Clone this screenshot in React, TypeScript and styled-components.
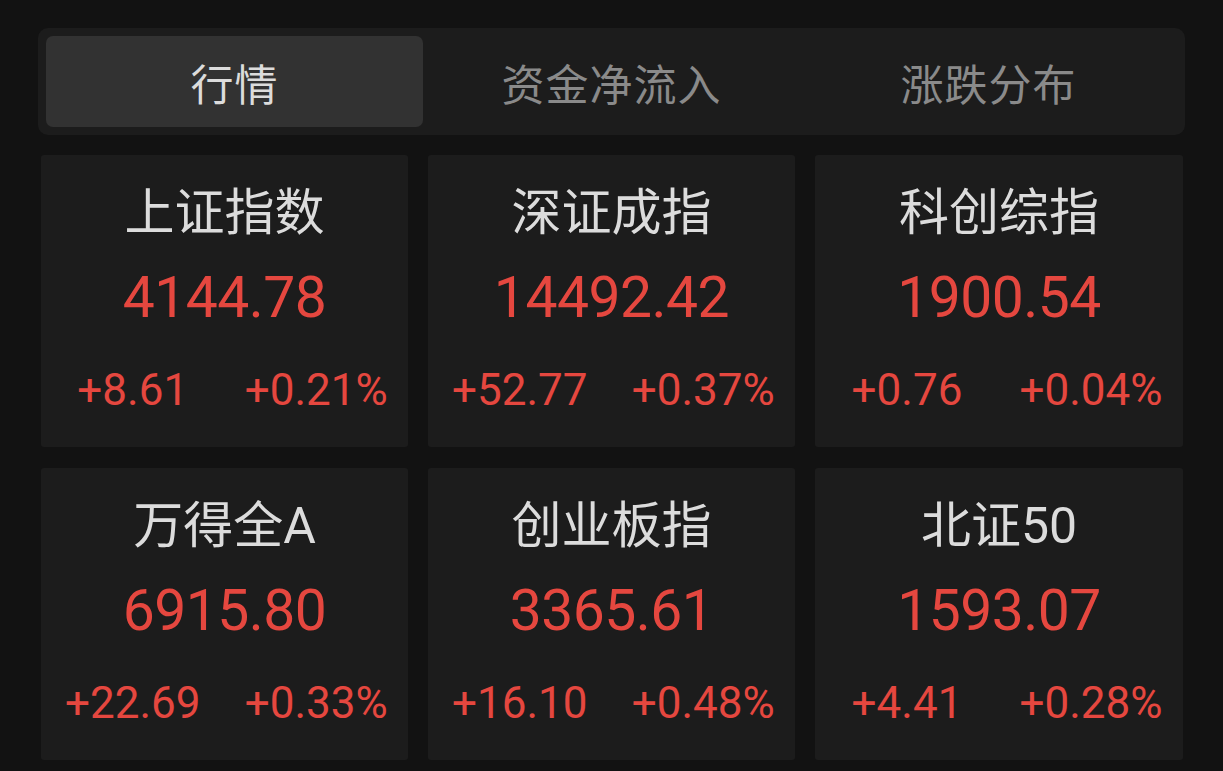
import React from 'react';
import styled, { createGlobalStyle } from 'styled-components';

const GlobalStyle = createGlobalStyle`
  html, body {
    margin: 0;
    padding: 0;
    background: #121212;
  }
  body {
    font-family: Roboto, "Noto Sans CJK SC", sans-serif;
  }
`;

type Quote = {
  name: string;
  price: string;
  change: string;
  percent: string;
};

const quotes: Quote[] = [
  { name: '上证指数', price: '4144.78', change: '+8.61', percent: '+0.21%' },
  { name: '深证成指', price: '14492.42', change: '+52.77', percent: '+0.37%' },
  { name: '科创综指', price: '1900.54', change: '+0.76', percent: '+0.04%' },
  { name: '万得全A', price: '6915.80', change: '+22.69', percent: '+0.33%' },
  { name: '创业板指', price: '3365.61', change: '+16.10', percent: '+0.48%' },
  { name: '北证50', price: '1593.07', change: '+4.41', percent: '+0.28%' },
];

const tabs = ['行情', '资金净流入', '涨跌分布'];

const Page = styled.div`
  width: 1223px;
  height: 771px;
  box-sizing: border-box;
  padding: 28px 38px 0 38px;
  background: #121212;
  overflow: hidden;
`;

const TabBar = styled.div`
  display: grid;
  grid-template-columns: repeat(3, 1fr);
  padding: 8px;
  background: #1c1c1c;
  border-radius: 10px;
  height: 107px;
  box-sizing: border-box;
`;

const Tab = styled.div<{ $active?: boolean }>`
  display: flex;
  align-items: center;
  justify-content: center;
  border-radius: 7px;
  background: ${(p) => (p.$active ? '#323232' : 'transparent')};
  color: ${(p) => (p.$active ? '#dcdcdc' : '#8a8a8a')};
  font-family: "Noto Sans CJK SC", sans-serif;
  font-size: 43px;
  letter-spacing: 1px;
`;

const Grid = styled.div`
  display: grid;
  grid-template-columns: 367px 367px 368px;
  grid-auto-rows: 292px;
  column-gap: 20px;
  row-gap: 21px;
  margin: 20px 0 0 3px;
`;

const Card = styled.div`
  display: flex;
  flex-direction: column;
  align-items: center;
  background: #1c1c1c;
  border-radius: 3px;
  padding-top: 30px;
  box-sizing: border-box;
`;

const Name = styled.div`
  font-family: Roboto, "Noto Sans CJK SC", sans-serif;
  font-size: 50px;
  line-height: 56px;
  color: #dcdcdc;
`;

const Price = styled.div`
  margin-top: 27px;
  font-size: 57px;
  line-height: 60px;
  color: #e5473f;
  letter-spacing: -0.5px;
`;

const ChangeRow = styled.div`
  align-self: stretch;
  display: grid;
  grid-template-columns: 1fr 1fr;
  margin-top: 37px;
  line-height: 50px;
`;

const Change = styled.span`
  text-align: center;
  font-size: 44px;
  color: #e5473f;
`;

export default function App() {
  return (
    <Page>
      <GlobalStyle />
      <TabBar>
        {tabs.map((t, i) => (
          <Tab key={t} $active={i === 0}>
            {t}
          </Tab>
        ))}
      </TabBar>
      <Grid>
        {quotes.map((q) => (
          <Card key={q.name}>
            <Name>{q.name}</Name>
            <Price>{q.price}</Price>
            <ChangeRow>
              <Change>{q.change}</Change>
              <Change>{q.percent}</Change>
            </ChangeRow>
          </Card>
        ))}
      </Grid>
    </Page>
  );
}
